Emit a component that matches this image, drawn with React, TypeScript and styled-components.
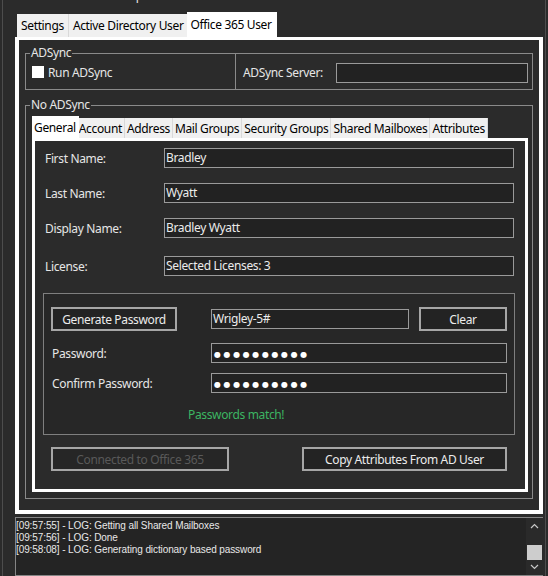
import React from "react";
import styled, { createGlobalStyle } from "styled-components";

const GlobalStyle = createGlobalStyle`
  html, body {
    margin: 0;
    padding: 0;
    background: #2b2b2b;
  }
  body {
    font-family: "Noto Sans", "Open Sans", sans-serif;
    font-size: 12px;
    letter-spacing: -0.35px;
    color: #e6e6e6;
  }
  * {
    box-sizing: border-box;
  }
`;

const Window = styled.div`
  width: 548px;
  height: 576px;
  overflow: hidden;
  background: #2b2b2b;
  padding-left: 2px;
`;

const Frame = styled.div`
  width: 544px;
  height: 576px;
  border-left: 1px solid #4d4d4d;
  border-right: 1px solid #4d4d4d;
  padding: 0 2px 0 12px;
  display: flex;
  flex-direction: column;
`;

const MenuBar = styled.div`
  display: flex;
  height: 4px;
  overflow: hidden;
  flex-shrink: 0;
`;

const MenuItem = styled.span<{ $w: number }>`
  width: ${(p) => p.$w}px;
  margin-top: -12px;
  line-height: 16px;
  color: #e6e6e6;
`;

const TabStrip = styled.div<{ $h: number; $inset: number }>`
  display: flex;
  align-items: flex-end;
  height: ${(p) => p.$h}px;
  padding-left: ${(p) => p.$inset}px;
  flex-shrink: 0;
`;

const Tab = styled.div<{ $active?: boolean; $h: number; $pad: number }>`
  height: ${(p) => (p.$active ? p.$h + 2 : p.$h)}px;
  padding: 0 ${(p) => p.$pad}px;
  margin: 0 ${(p) => (p.$active ? -2 : 0)}px;
  background: ${(p) => (p.$active ? "#ffffff" : "#f0f0f0")};
  border-right: 1px solid ${(p) => (p.$active ? "#ffffff" : "#d9d9d9")};
  color: #000;
  display: flex;
  align-items: center;
  white-space: nowrap;
  position: relative;
  z-index: ${(p) => (p.$active ? 1 : 0)};
`;

const OuterPanel = styled.div`
  height: 477px;
  flex-shrink: 0;
  border: 4px solid #ffffff;
  border-top-width: 3px;
  background: #2b2b2b;
  padding: 5px 6px 0 6px;
`;

const GroupBox = styled.fieldset<{ $mt?: number }>`
  margin: ${(p) => p.$mt ?? 0}px 0 0 0;
  padding: 0;
  border: 1px solid #8a8a8a;
  min-width: 0;
`;

const Legend = styled.legend`
  margin-left: 4px;
  padding: 0 1px;
  line-height: 16px;
  font-size: 12px;
  color: #e6e6e6;
`;

const SyncRow = styled.div`
  display: flex;
  height: 28px;
`;

const SyncLeft = styled.div`
  width: 209px;
  padding: 2px 0 0 6px;
`;

const CheckRow = styled.label`
  display: flex;
  align-items: center;
  gap: 4px;
  height: 18px;
  color: #e6e6e6;
`;

const CheckBox = styled.span`
  width: 12px;
  height: 12px;
  background: #ffffff;
  display: inline-block;
`;

const SyncRight = styled.div`
  flex: 1;
  margin-top: -8px;
  height: 36px;
  border-left: 1px solid #8a8a8a;
  padding: 3px 0 0 7px;
  display: flex;
  align-items: center;
`;

const Label = styled.span<{ $w: number }>`
  width: ${(p) => p.$w}px;
  flex-shrink: 0;
  color: #e6e6e6;
  white-space: nowrap;
`;

const TextBox = styled.div<{ $w: number }>`
  width: ${(p) => p.$w}px;
  height: 20px;
  flex-shrink: 0;
  border: 1px solid #9a9a9a;
  background: #222222;
  color: #ececec;
  padding-left: 1px;
  line-height: 18px;
  white-space: nowrap;
  overflow: hidden;
`;

const Dots = styled.span`
  font-family: "DejaVu Sans", sans-serif;
  font-size: 8px;
  letter-spacing: 2.6px;
  color: #ffffff;
  padding-left: 1px;
`;

const GroupInner = styled.div`
  padding: 4px 4px 6px 6px;
`;

const InnerPanel = styled.div`
  height: 354px;
  border: 3px solid #ffffff;
  background: #2b2b2b;
  padding: 7px 0 0 10px;
`;

const FieldRow = styled.div<{ $mt?: number }>`
  display: flex;
  align-items: center;
  height: 20px;
  margin-top: ${(p) => p.$mt ?? 0}px;
`;

const PasswordBox = styled.div`
  margin: 17px 0 0 -2px;
  width: 472px;
  height: 142px;
  border: 1px solid #7f7f7f;
  background: #272727;
  padding: 13px 0 0 7px;
`;

const PwRow = styled.div<{ $mt?: number; $h?: number; $indent?: number }>`
  display: flex;
  align-items: center;
  height: ${(p) => p.$h ?? 20}px;
  margin-top: ${(p) => p.$mt ?? 0}px;
  padding-left: ${(p) => p.$indent ?? 0}px;
`;

const Button = styled.div<{ $w: number; $disabled?: boolean }>`
  width: ${(p) => p.$w}px;
  height: 24px;
  flex-shrink: 0;
  border: 2px solid #a6a6a6;
  background: ${(p) => (p.$disabled ? "#262626" : "#232323")};
  color: ${(p) => (p.$disabled ? "#595959" : "#ececec")};
  display: flex;
  align-items: center;
  justify-content: center;
  white-space: nowrap;
`;

const Match = styled.span`
  color: #3cb562;
  padding-left: 137px;
`;

const ButtonBar = styled.div`
  display: flex;
  justify-content: space-between;
  margin: 12px 18px 0 6px;
`;

const Log = styled.div`
  margin-top: 3px;
  flex: 1;
  display: flex;
  border: 1px solid #858585;
  border-right: none;
  background: #242424;
  min-height: 0;
`;

const LogText = styled.div`
  flex: 1;
  padding: 2px 0 0 0;
  font-family: "Liberation Sans", Arial, sans-serif;
  font-size: 10px;
  letter-spacing: -0.1px;
  line-height: 12px;
  color: #e8e8e8;
`;

const ScrollBar = styled.div`
  width: 17px;
  display: flex;
  flex-direction: column;
  align-items: center;
  background: #2a2a2a;
`;

const Arrow = styled.div`
  height: 17px;
  display: flex;
  align-items: center;
  justify-content: center;
`;

const Thumb = styled.div`
  width: 15px;
  height: 16px;
  margin-top: 12px;
  background: #cdcdcd;
`;

function Chevron({ up }: { up?: boolean }) {
  return (
    <svg width="9" height="6" viewBox="0 0 9 6">
      <polyline
        points={up ? "1,5 4.5,1.5 8,5" : "1,1 4.5,4.5 8,1"}
        fill="none"
        stroke="#c8c8c8"
        strokeWidth="1.2"
      />
    </svg>
  );
}

const outerTabs = ["Settings", "Active Directory User", "Office 365 User"];
const innerTabs = [
  "General",
  "Account",
  "Address",
  "Mail Groups",
  "Security Groups",
  "Shared Mailboxes",
  "Attributes",
];

const fields = [
  { label: "First Name:", value: "Bradley", mt: 0 },
  { label: "Last Name:", value: "Wyatt", mt: 15 },
  { label: "Display Name:", value: "Bradley Wyatt", mt: 15 },
  { label: "License:", value: "Selected Licenses: 3", mt: 18 },
];

const logLines = [
  "[09:57:55] - LOG: Getting all Shared Mailboxes",
  "[09:57:56] - LOG: Done",
  "[09:58:08] - LOG: Generating dictionary based password",
];

export default function App() {
  return (
    <Window>
      <GlobalStyle />
      <Frame>
        <MenuBar>
          <MenuItem $w={32}>File</MenuItem>
          <MenuItem $w={38}>Tools</MenuItem>
          <MenuItem $w={33}>Edit</MenuItem>
          <MenuItem $w={40}>Help</MenuItem>
        </MenuBar>

        <TabStrip $h={33} $inset={2}>
          {outerTabs.map((t) => (
            <Tab key={t} $h={23} $pad={4} $active={t === "Office 365 User"}>
              {t}
            </Tab>
          ))}
        </TabStrip>

        <OuterPanel>
          <GroupBox>
            <Legend>ADSync</Legend>
            <SyncRow>
              <SyncLeft>
                <CheckRow>
                  <CheckBox />
                  Run ADSync
                </CheckRow>
              </SyncLeft>
              <SyncRight>
                <Label $w={93}>ADSync Server:</Label>
                <TextBox $w={192} />
              </SyncRight>
            </SyncRow>
          </GroupBox>

          <GroupBox $mt={7}>
            <Legend>No ADSync</Legend>
            <GroupInner>
              <TabStrip $h={21} $inset={2}>
                {innerTabs.map((t) => (
                  <Tab key={t} $h={20} $pad={2} $active={t === "General"}>
                    {t}
                  </Tab>
                ))}
              </TabStrip>
              <InnerPanel>
                {fields.map((f) => (
                  <FieldRow key={f.label} $mt={f.mt}>
                    <Label $w={119}>{f.label}</Label>
                    <TextBox $w={350}>{f.value}</TextBox>
                  </FieldRow>
                ))}

                <PasswordBox>
                  <PwRow $h={24}>
                    <Button $w={126}>Generate Password</Button>
                    <TextBox $w={198} style={{ marginLeft: 34 }}>
                      Wrigley-5#
                    </TextBox>
                    <Button $w={88} style={{ marginLeft: 10 }}>
                      Clear
                    </Button>
                  </PwRow>
                  <PwRow $mt={12} $indent={1}>
                    <Label $w={159}>Password:</Label>
                    <TextBox $w={296}>
                      <Dots>●●●●●●●●●●</Dots>
                    </TextBox>
                  </PwRow>
                  <PwRow $mt={10} $indent={1}>
                    <Label $w={159}>Confirm Password:</Label>
                    <TextBox $w={296}>
                      <Dots>●●●●●●●●●●</Dots>
                    </TextBox>
                  </PwRow>
                  <PwRow $mt={13} $h={16}>
                    <Match>Passwords match!</Match>
                  </PwRow>
                </PasswordBox>

                <ButtonBar>
                  <Button $w={178} $disabled>
                    Connected to Office 365
                  </Button>
                  <Button $w={205}>Copy Attributes From AD User</Button>
                </ButtonBar>
              </InnerPanel>
            </GroupInner>
          </GroupBox>
        </OuterPanel>

        <Log>
          <LogText>
            {logLines.map((l) => (
              <div key={l}>{l}</div>
            ))}
          </LogText>
          <ScrollBar>
            <Arrow>
              <Chevron up />
            </Arrow>
            <Thumb />
            <Arrow>
              <Chevron />
            </Arrow>
          </ScrollBar>
        </Log>
      </Frame>
    </Window>
  );
}
